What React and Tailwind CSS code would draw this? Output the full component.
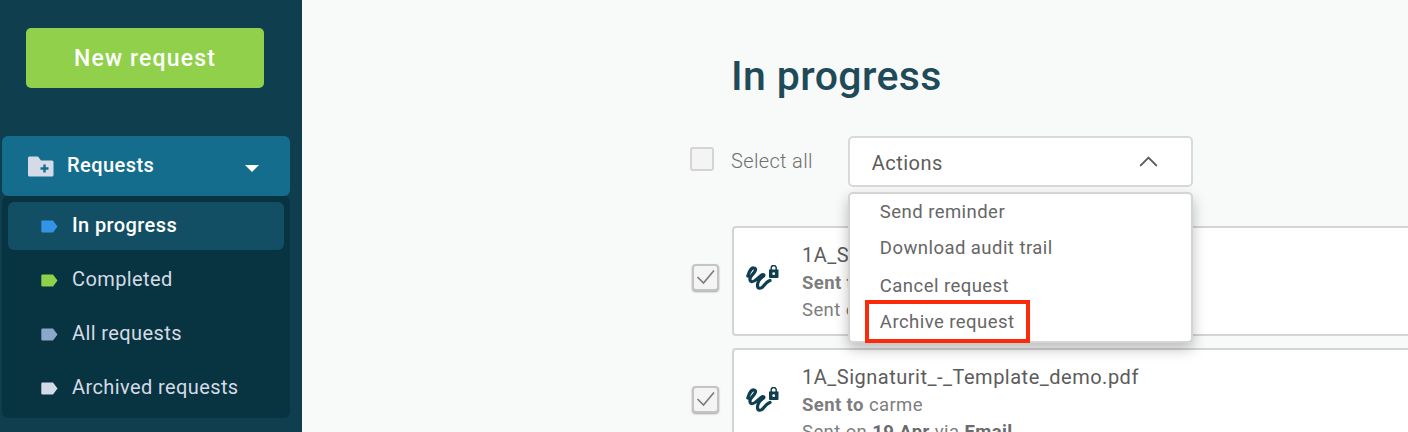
import { ChevronUp } from 'lucide-react'

const font = 'font-["Roboto",sans-serif]'

const navItems = [
    { label: 'In progress', tag: '#3593e6', active: true },
    { label: 'Completed', tag: '#90d04a' },
    { label: 'All requests', tag: '#8ba7c9' },
    { label: 'Archived requests', tag: '#d5dbe6' }
]

const menuItems = [
    { label: 'Send reminder', className: 'h-[36px] pt-[3px]' },
    { label: 'Download audit trail', className: 'h-[36px] pt-[3px]' },
    { label: 'Cancel request', className: 'h-[38px] pt-[5px]' },
    { label: 'Archive request', className: 'h-[36px] pt-[3px]' }
]

function FolderPlus() {
    return (
        <svg width="26" height="21" viewBox="0 0 26 21" className="shrink-0">
            <path d="M1.500 0.500h8.500l3 4h11a1.500 1.500 0 0 1 1.500 1.500v13a1.500 1.500 0 0 1-1.500 1.500h-22.500a1.500 1.500 0 0 1-1.500-1.500v-17a1.500 1.500 0 0 1 1.500-1.500z" fill="#d5dbe6" />
            <path d="M16.500 8.500v8M12.500 12.500h8" stroke="#156d8e" strokeWidth="2.400" fill="none" />
        </svg>
    )
}

function Tag({ color }) {
    return (
        <svg width="17" height="13" viewBox="0 0 17 13" className="shrink-0">
            <path d="M1.500 0.500h10.500l4.500 6-4.500 6h-10.500a1.200 1.200 0 0 1-1.200-1.200v-9.600a1.200 1.200 0 0 1 1.200-1.200z" fill={color} />
        </svg>
    )
}

function SignatureLock() {
    return (
        <svg width="33" height="26" viewBox="0 0 33 26" className="shrink-0">
            <path d="M1.800 11C3 7 5.500 2.500 8 3C11 3.500 9 7 6.500 9.500C4 12 3 15 5 16.500C7.500 18 12 13 15 10.500C17.500 8.500 19 10 17 11.500C14 13.500 11.500 17 11.500 20.500C11.500 24 15 24 17 21.500C19 19 21 16.500 24 15.500" stroke="#0f3f4f" strokeWidth="3.200" strokeLinecap="round" strokeLinejoin="round" fill="none" />
            <path d="M25.200 5v-2a2.500 2.500 0 0 1 5 0v2" stroke="#0f3f4f" strokeWidth="1.500" fill="none" />
            <path d="M23 4.500h9.500v7.500a1 1 0 0 1-1 1h-7.500a1 1 0 0 1-1-1z" fill="#0f3f4f" />
            <circle cx="27.700" cy="8.700" r="1.400" fill="#ffffff" />
        </svg>
    )
}

function Checkbox({ checked }) {
    return (
        <span className="flex h-[27px] w-[27px] items-center justify-center rounded-[4px] border-2 border-[#c4c4c4] bg-[#f4f4f4] shadow-[0_1px_2px_rgba(0,0,0,0.35)]">
            {checked && (
                <svg width="20" height="16" viewBox="0 0 20 16">
                    <path d="M1.500 8L7.500 14L18 1.500" stroke="#7d7d7d" strokeWidth="1.700" fill="none" />
                </svg>
            )}
        </span>
    )
}

function RequestCard({ name, sentTo }) {
    return (
        <div className="flex items-center">
            <div className="flex w-[42px] shrink-0 justify-start pb-[8px] pl-[2px]">
                <Checkbox checked />
            </div>
            <div className="flex h-[110px] w-[800px] shrink-0 rounded-[4px] border-2 border-[#d4d4d4] bg-white">
                <div className="flex w-[68px] shrink-0 items-center pb-[6px] pl-[12px]">
                    <SignatureLock />
                </div>
                <div className="pt-[12px] text-[#7d7d7d]">
                    <div className="text-[20px] leading-[30px] tracking-[0.5px] text-[#5c5c5c]">{name}</div>
                    <div className="text-[18.500px] leading-[27px] tracking-[0.4px]">
                        <b className="font-bold">Sent to</b> {sentTo}
                    </div>
                    <div className="text-[18.500px] leading-[26px] tracking-[0.4px]">
                        Sent on <b className="font-bold text-[#6b6b6b]">19 Apr</b> via <b className="font-bold text-[#6b6b6b]">Email</b>
                    </div>
                </div>
            </div>
        </div>
    )
}

export default function App() {
    return (
        <div className={`flex h-[432px] w-[1408px] overflow-hidden bg-[#f8f9f9] ${font}`}>
            <aside className="h-full w-[302px] shrink-0 bg-[#0f3f4f] pl-[2px] pr-[12px] pt-[28px]">
                <button className="ml-[24px] flex h-[60px] w-[238px] items-center justify-center rounded-[5px] bg-[#90d04a] pt-[2px] text-[23px] font-medium tracking-[1.150px] text-white">
                    New request
                </button>
                <div className="mt-[48px] flex h-[60px] items-center rounded-[6px] bg-[#156d8e] pl-[26px] pr-[31px] text-white">
                    <FolderPlus />
                    <span className="ml-[13px] flex-1 pb-[3px] text-[20px] font-medium tracking-[0.45px]">Requests</span>
                    <span className="mt-[4px] h-0 w-0 border-x-[7px] border-t-[7px] border-x-transparent border-t-white" />
                </div>
                <div className="h-[222px] rounded-[6px] bg-[#083340] px-[6px] pt-[6px]">
                    {navItems.map(item => (
                        <div
                            key={item.label}
                            className={`flex items-center pl-[33px] text-[20px] tracking-[0.4px] ${item.active ? 'mb-[6px] h-[48px] rounded-[6px] bg-[#124f64] font-medium text-white' : 'h-[54px] pb-[6px] text-[#d5dbe6]'}`}
                        >
                            <Tag color={item.tag} />
                            <span className="ml-[14px] pb-[3px]">{item.label}</span>
                        </div>
                    ))}
                </div>
            </aside>

            <main className="relative flex-1 pl-[388px] pt-[49px]">
                <h1 className="ml-[41px] text-[41px] font-medium leading-[54px] tracking-[0.4px] text-[#1f4a58]">In progress</h1>

                <div className="mt-[33px] flex h-[51px] items-start">
                    <span className="mt-[11px] h-[24px] w-[24px] rounded-[3px] border-2 border-[#d4d4d4] bg-[#f4f4f4]" />
                    <span className="ml-[17px] mt-[11px] text-[20px] font-light leading-[28px] tracking-[0.35px] text-[#6f6f6f]">Select all</span>
                    <div className="relative ml-[35px] h-[51px] w-[345px] shrink-0">
                        <button className="flex h-full w-full items-center justify-between rounded-[5px] border-2 border-[#d9d9d9] bg-white pl-[22px] pr-[27px] text-[20px] tracking-[0.45px] text-[#5c5c5c]">
                            <span className="pt-[3px]">Actions</span>
                            <ChevronUp size={31} strokeWidth={1.500} className="text-[#5c5c5c]" />
                        </button>
                        <ul className="absolute left-0 top-[56px] z-10 h-[151px] w-[345px] rounded-[5px] border-2 border-[#d4d4d4] bg-white pl-[30px] pt-[1px] text-[18.500px] leading-[28px] tracking-[0.45px] text-[#666666] shadow-[0_6px_14px_rgba(0,0,0,0.25)]">
                            {menuItems.map(item => (
                                <li key={item.label} className={item.className}>{item.label}</li>
                            ))}
                            <li className="absolute left-[15px] top-[106px] h-[43px] w-[165px] border-[4px] border-[#fb2a08]" />
                        </ul>
                    </div>
                </div>

                <div className="mt-[39px] flex flex-col gap-[12px]">
                    <RequestCard name="1A_Signaturit_-_Template_demo.pdf" sentTo="carme" />
                    <RequestCard name="1A_Signaturit_-_Template_demo.pdf" sentTo="carme" />
                </div>
            </main>
        </div>
    )
}
